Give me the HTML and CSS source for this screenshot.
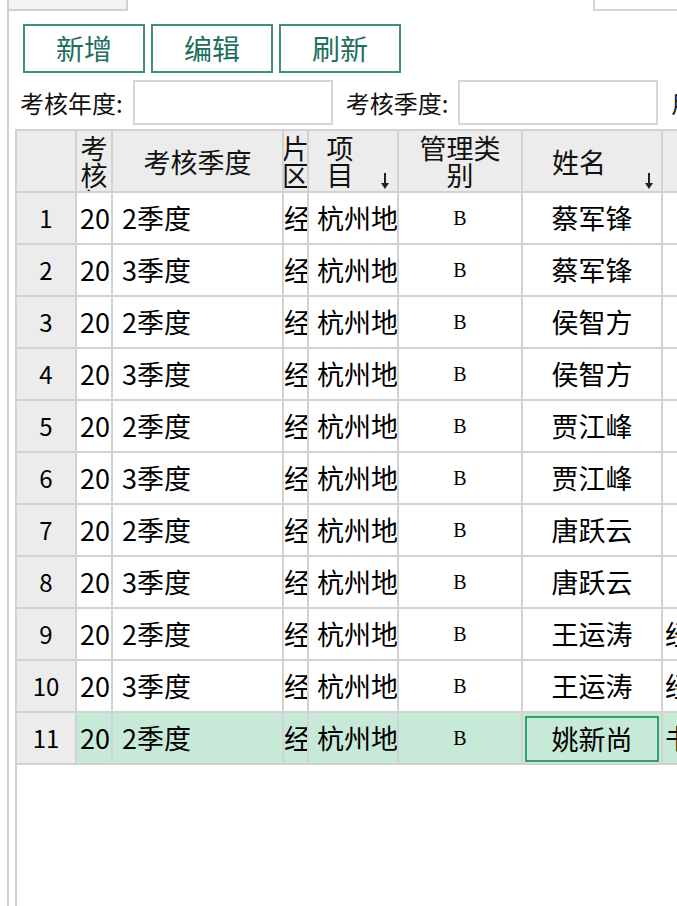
FILE: index.html
```html
<!DOCTYPE html>
<html lang="zh-CN">
<head>
<meta charset="utf-8">
<title>考核</title>
<link rel="stylesheet" href="styles.css">
</head>
<body>
<div class="page">
  <div class="top">
    <div class="top-left"></div>
    <div class="top-right"></div>
  </div>
  <div class="toolbar">
    <button class="btn">新增</button>
    <button class="btn">编辑</button>
    <button class="btn">刷新</button>
  </div>
  <div class="filters">
    <span class="lbl">考核年度:</span><span class="inp"></span>
    <span class="lbl">考核季度:</span><span class="inp"></span>
    <span class="lbl">用户名:</span>
  </div>
  <div class="grid">
    <div class="row head">
      <div class="c c1"></div>
      <div class="c c2 top-al">考核年度</div>
      <div class="c c3">考核季度</div>
      <div class="c c4">片区</div>
      <div class="c c5 sort"><span>项<br>目</span><svg class="arr" viewBox="0 0 10 18" width="10" height="18"><path d="M5 1V13" stroke="#222" stroke-width="2"/><path d="M1 11H9L5 17Z" fill="#222"/></svg></div>
      <div class="c c6">管理类<br>别</div>
      <div class="c c7 sort"><span>姓名</span><svg class="arr" viewBox="0 0 10 18" width="10" height="18"><path d="M5 1V13" stroke="#222" stroke-width="2"/><path d="M1 11H9L5 17Z" fill="#222"/></svg></div>
      <div class="c c8"></div>
    </div>
    <div class="row"><div class="c c1">1</div><div class="c c2">2019</div><div class="c c3">2季度</div><div class="c c4">经营</div><div class="c c5">杭州地区</div><div class="c c6">B</div><div class="c c7">蔡军锋</div><div class="c c8"></div></div>
    <div class="row"><div class="c c1">2</div><div class="c c2">2019</div><div class="c c3">3季度</div><div class="c c4">经营</div><div class="c c5">杭州地区</div><div class="c c6">B</div><div class="c c7">蔡军锋</div><div class="c c8"></div></div>
    <div class="row"><div class="c c1">3</div><div class="c c2">2019</div><div class="c c3">2季度</div><div class="c c4">经营</div><div class="c c5">杭州地区</div><div class="c c6">B</div><div class="c c7">侯智方</div><div class="c c8"></div></div>
    <div class="row"><div class="c c1">4</div><div class="c c2">2019</div><div class="c c3">3季度</div><div class="c c4">经营</div><div class="c c5">杭州地区</div><div class="c c6">B</div><div class="c c7">侯智方</div><div class="c c8"></div></div>
    <div class="row"><div class="c c1">5</div><div class="c c2">2019</div><div class="c c3">2季度</div><div class="c c4">经营</div><div class="c c5">杭州地区</div><div class="c c6">B</div><div class="c c7">贾江峰</div><div class="c c8"></div></div>
    <div class="row"><div class="c c1">6</div><div class="c c2">2019</div><div class="c c3">3季度</div><div class="c c4">经营</div><div class="c c5">杭州地区</div><div class="c c6">B</div><div class="c c7">贾江峰</div><div class="c c8"></div></div>
    <div class="row"><div class="c c1">7</div><div class="c c2">2019</div><div class="c c3">2季度</div><div class="c c4">经营</div><div class="c c5">杭州地区</div><div class="c c6">B</div><div class="c c7">唐跃云</div><div class="c c8"></div></div>
    <div class="row"><div class="c c1">8</div><div class="c c2">2019</div><div class="c c3">3季度</div><div class="c c4">经营</div><div class="c c5">杭州地区</div><div class="c c6">B</div><div class="c c7">唐跃云</div><div class="c c8"></div></div>
    <div class="row"><div class="c c1">9</div><div class="c c2">2019</div><div class="c c3">2季度</div><div class="c c4">经营</div><div class="c c5">杭州地区</div><div class="c c6">B</div><div class="c c7">王运涛</div><div class="c c8">经理</div></div>
    <div class="row"><div class="c c1">10</div><div class="c c2">2019</div><div class="c c3">3季度</div><div class="c c4">经营</div><div class="c c5">杭州地区</div><div class="c c6">B</div><div class="c c7">王运涛</div><div class="c c8">经理</div></div>
    <div class="row cur"><div class="c c1">11</div><div class="c c2">2019</div><div class="c c3">2季度</div><div class="c c4">经营</div><div class="c c5">杭州地区</div><div class="c c6">B</div><div class="c c7 sel-cell"><div class="sel">姚新尚</div></div><div class="c c8">书记</div></div>
  </div>
</div>
</body>
</html>
```
FILE: styles.css
```css
* { box-sizing: border-box; }
html, body {
  margin: 0;
  padding: 0;
  width: 677px;
  height: 906px;
  overflow: hidden;
  background: #fff;
}
body {
  font-family: "Noto Sans CJK SC", sans-serif;
  color: #000;
}
.page {
  margin-left: 7px;
  width: 670px;
  height: 906px;
  border-left: 2px solid #d0d0d0;
  display: flex;
  flex-direction: column;
  overflow: hidden;
}
.top {
  display: flex;
  height: 11px;
  flex-shrink: 0;
}
.top-left {
  width: 119px;
  height: 11px;
  background: #f3f3f3;
  border-right: 2px solid #d0d0d0;
  border-bottom: 2px solid #d0d0d0;
}
.top-right {
  margin-left: auto;
  width: 84px;
  height: 11px;
  background: #fff;
  border-left: 2px solid #d4d4d4;
  border-bottom: 2px solid #d4d4d4;
}
.toolbar {
  display: flex;
  gap: 6px;
  margin-top: 13px;
  padding-left: 14px;
  flex-shrink: 0;
}
.btn {
  width: 122px;
  height: 49px;
  margin: 0;
  padding: 0;
  background: #fff;
  border: 2px solid #3f8f80;
  color: #1e6e5e;
  font-family: "Noto Sans CJK SC", sans-serif;
  font-size: 28px;
  line-height: 45px;
}
.filters {
  display: flex;
  align-items: center;
  margin-top: 7px;
  padding-left: 11px;
  height: 45px;
  flex-shrink: 0;
  white-space: nowrap;
}
.lbl {
  flex-shrink: 0;
  font-size: 24px;
  color: #111;
  margin-right: 10px;
}
.inp {
  flex-shrink: 0;
  width: 200px;
  height: 45px;
  border: 2px solid #d6d6d6;
  background: #fff;
  margin-right: 13px;
}
.grid {
  flex: 1;
  margin-top: 4px;
  margin-left: 6px;
  border-left: 2px solid #d2d2d2;
  border-top: 2px solid #d2d2d2;
  overflow: hidden;
}
.row {
  display: grid;
  grid-template-columns: 60px 36px 171px 25px 90px 124px 140px 200px;
  width: max-content;
  height: 52px;
}
.row.head { height: 62px; }
.c {
  border-right: 2px solid #d2d2d2;
  border-bottom: 2px solid #d2d2d2;
  overflow: hidden;
  white-space: nowrap;
  font-size: 27px;
  display: flex;
  align-items: center;
  line-height: 50px;
}
.c1 {
  background: #ececec;
  justify-content: center;
  font-size: 24px;
}
.c2 { padding-left: 3px; font-size: 27px; }
.c3 { padding-left: 9px; }
.c4 { justify-content: flex-start; padding-left: 0; }
.c5 { padding-left: 8px; }
.c6 {
  justify-content: center;
  font-family: "Liberation Serif", serif;
  font-size: 20px;
}
.c7 { justify-content: center; }
.c8 { padding-left: 2px; }
.head .c {
  background: #ececec;
  white-space: normal;
  justify-content: center;
  text-align: center;
  line-height: 27px;
  font-size: 27px;
  font-family: "Noto Sans CJK SC", sans-serif;
  color: #111;
  padding-left: 0;
  position: relative;
}
.head .c.top-al {
  align-items: flex-start;
  padding-top: 3px;
}
.head .sort { padding-right: 26px; }
.arr {
  position: absolute;
  right: 7px;
  bottom: 1px;
}
.cur .c { background: #c7e9d7; }
.cur .c1 { background: #ececec; }
.sel-cell { padding: 3px 2px 1px 2px; }
.sel {
  flex: 1;
  height: 100%;
  border: 2px solid #34a06a;
  display: flex;
  align-items: center;
  justify-content: center;
  line-height: 40px;
}
```
